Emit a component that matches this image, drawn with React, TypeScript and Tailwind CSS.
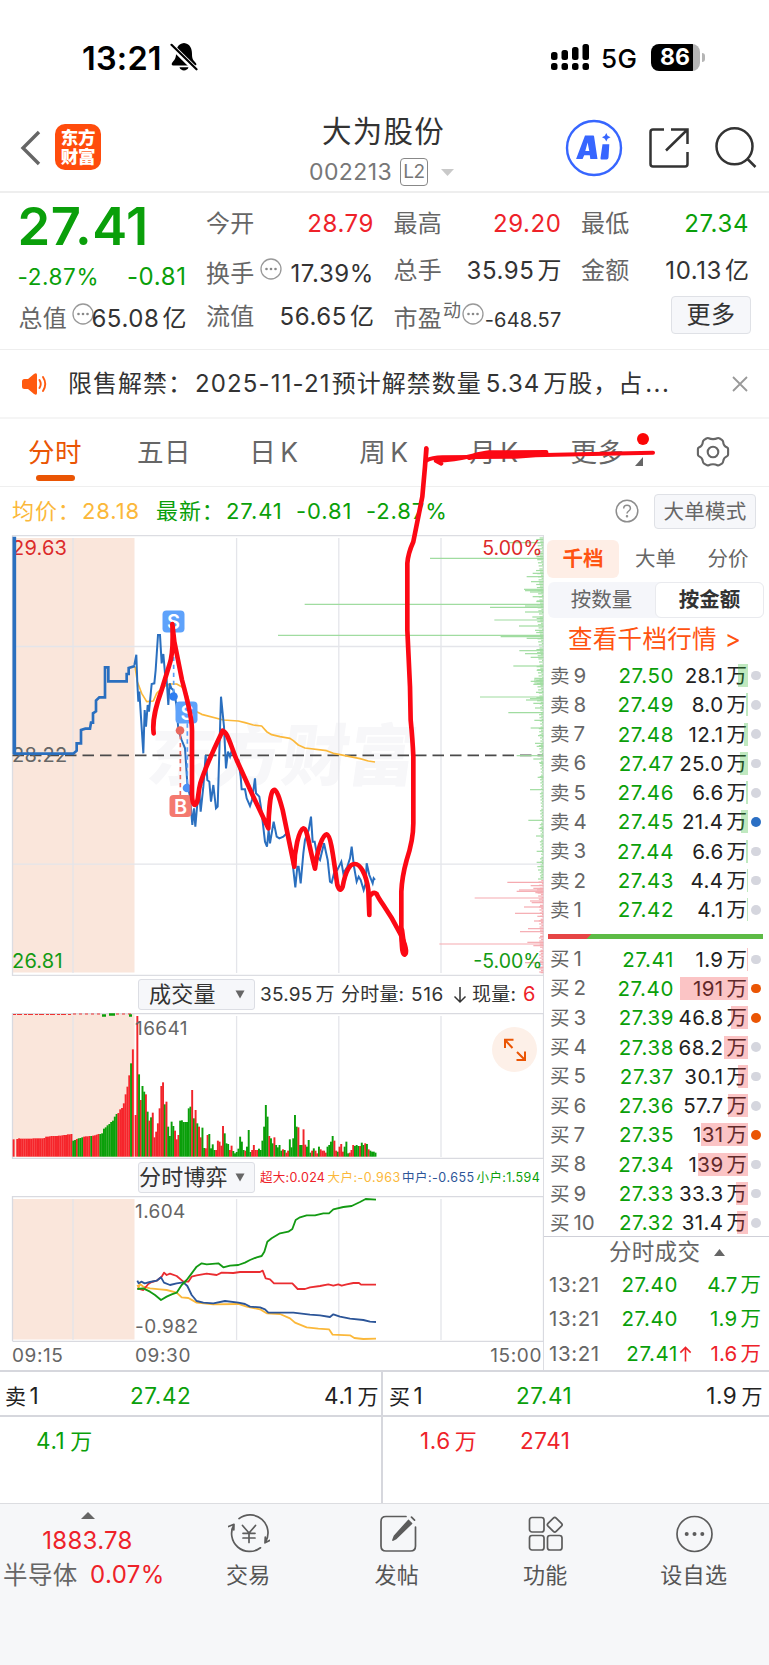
import React from "react";

type Level = { n: string; p: string; v: string; w: number; dot?: string };

const sells: Level[] = [
  { n: "9", p: "27.50", v: "28.1", w: 10 },
  { n: "8", p: "27.49", v: "8.0", w: 2 },
  { n: "7", p: "27.48", v: "12.1", w: 4 },
  { n: "6", p: "27.47", v: "25.0", w: 8.5 },
  { n: "5", p: "27.46", v: "6.6", w: 2 },
  { n: "4", p: "27.45", v: "21.4", w: 7.5, dot: "bg-[#2a6fc4]" },
  { n: "3", p: "27.44", v: "6.6", w: 2 },
  { n: "2", p: "27.43", v: "4.4", w: 1 },
  { n: "1", p: "27.42", v: "4.1", w: 1 },
];

const buys: Level[] = [
  { n: "1", p: "27.41", v: "1.9", w: 1 },
  { n: "2", p: "27.40", v: "191", w: 68, dot: "bg-[#ea5504]" },
  { n: "3", p: "27.39", v: "46.8", w: 17, dot: "bg-[#ea5504]" },
  { n: "4", p: "27.38", v: "68.2", w: 24 },
  { n: "5", p: "27.37", v: "30.1", w: 10.5 },
  { n: "6", p: "27.36", v: "57.7", w: 20.5 },
  { n: "7", p: "27.35", v: "131", w: 47, dot: "bg-[#ea5504]" },
  { n: "8", p: "27.34", v: "139", w: 50 },
  { n: "9", p: "27.33", v: "33.3", w: 12 },
  { n: "10", p: "27.32", v: "31.4", w: 11 },
];

const volume =
  "r125 r422 g247 r170 g212 g195 r187 g135 r108 g118 r132 r58 r75 r100 r145 r212 r223 g157 r165 g90 g62 g105 g92 r78 r52 r65 g108 g109 g104 g104 g104 g145 g150 r200 g115 r140 g100 r90 r58 g87 g26 r25 r65 g68 g25 g37 g20 r20 r48 r45 r33 r92 g70 g40 g38 r20 r33 g17 g10 g14 g24 g60 g45 g20 r18 g30 g80 g14 r20 r35 r20 r20 g24 g20 g48 g90 g155 g120 r62 g55 g40 r58 g35 g28 g35 g18 r22 g20 r12 r18 g52 g28 g55 g125 g90 r88 g35 g35 r82 r36 g30 g50 g12 r18 g25 r18 r10 g30 r22 r18 r18 r12 g30 g35 g45 g62 r48 r18 g15 r30 r38 r15 g30 g45 g10 r12 r20 r35 g32 g35 g32 r32 g42 g35 r40 g38 r22 g18 g15 g15 g12".split(" ");

const auction =
  "r52 w0 r53 r55 r54 r54 r54 r54 r54 r54 r54 r55 r55 r55 r55 r55 r55 r56 r60 r60 r61 r62 r62 r62 r62 r63 r63 r64 r65 r65 r67 r67 r68 g48 g50 r53 g55 g56 g58 r60 r61 r61 r62 g62 r63 r64 r66 r68 g68 g70 g84 g88 g94 g98 g104 g108 g120 g128 r131 r142 r146 r160 r187 r210 r244 g280 r322".split(" ");

const depth: [number, number][] = [
  [38, 110], [85, 340], [130, 32], [140, 50], [155, 37], [178, 58], [182, 55], [186, 40], [200, 32], [213, 20], [223, 716], [228, 55], [232, 160],
  [246, 55], [261, 33], [270, 147], [288, 73], [301, 25], [316, 796], [320, 128], [325, 50], [362, 72], [371, 55], [382, 38], [408, 90], [421, 20],
  [445, 27], [450, 28], [454, 38], [459, 27], [463, 30], [487, 22], [501, 190], [506, 40], [510, 52], [520, 30], [534, 25], [548, 105], [571, 27],
  [594, 38], [617, 16], [640, 25], [649, 20], [677, 80], [687, 30], [700, 10], [742, 17], [779, 40], [871, 45], [895, 14], [918, 22], [964, 20],
  [997, 20], [1010, 18], [1020, 16], [1057, 108], [1067, 38], [1075, 30], [1080, 73], [1084, 80], [1088, 24], [1104, 206], [1113, 40], [1118, 35],
  [1131, 58], [1150, 85], [1159, 18], [1173, 28], [1196, 46], [1205, 70], [1219, 10], [1237, 48], [1242, 312], [1247, 30], [1265, 12], [1298, 55],
  [1312, 20], [1328, 8],
];

const small: [number, number][] = Array.from({ length: 281 }, (_, i) => {
  const y = 24 + i * 4.65;
  const r = ((i * 7919 + 13) % 31) / 31;
  const base = y < 130 ? 22 : y < 520 ? 20 : y < 700 ? 12 : y < 1040 ? 9 : y < 1130 ? 18 : 12;
  return [y, 2 + r * base];
});

const tone = (y: number) => (y < 1050 ? "#a0dca0" : "#f5aab0");

function Grid({ y1, y2 }: { y1: number; y2: number }) {
  return (
    <g stroke="#e4e5ea" strokeWidth="1.3">
      {[73, 236.6, 338.8, 441].map((x) => (
        <line key={x} x1={x} x2={x} y1={y1} y2={y2} />
      ))}
    </g>
  );
}

function PriceChart() {
  return (
    <svg className="block" width="544" height="441" viewBox="0 535 544 441" fontFamily='Inter, "Noto Sans CJK SC", sans-serif'>
      <rect x="12.5" y="538" width="122" height="434.5" fill="#fae6db" />
      <text x="147" y="780" fontSize="67" fontWeight="900" fill="#f7f7f9" transform="skewX(-8) translate(108 0)">东方财富</text>
      <Grid y1={538} y2={973} />
      <g stroke="#e4e5ea" strokeWidth="1.3">
        <path d="M12.5 646.5H543M12.5 864.2H543" />
        <path d="M12.5 535.5H544M12.5 975.3H544M12.5 535V976M543.5 535V976" stroke="#dcdde2" />
      </g>
      <path d="M12.5 755.3H543" stroke="#4a4a4a" strokeWidth="1.8" strokeDasharray="11.5 6" />
      <g transform="translate(260 530) scale(.33333)" strokeWidth="3.6">
        {[...small, ...depth].map(([y, l], i) => (
          <line key={i} x1={850 - l} x2={850} y1={y} y2={y} stroke={tone(y)} />
        ))}
      </g>
      <text x="12" y="554.5" fontSize="20" letterSpacing=".2" fill="#dc2a2a">29.63</text>
      <text x="12" y="762" fontSize="20" letterSpacing=".2" fill="#666">28.22</text>
      <text x="12" y="968" fontSize="20" letterSpacing=".2" fill="#139a13">26.81</text>
      <text x="542.5" y="554.5" fontSize="19.5" textAnchor="end" fill="#dc2a2a">5.00%</text>
      <text x="542.5" y="968" fontSize="19.5" textAnchor="end" fill="#139a13">-5.00%</text>
      <g transform="translate(0 530) scale(.33333)" fill="none" strokeLinejoin="round">
        <path
          stroke="#fbb83a"
          strokeWidth="5"
          d="M405 410L412 455 425 490 440 515 460 513 470 490 490 470 510 462 530 462 545 470 560 490 572 530 590 545 605 553 670 570 715 573 735 578 760 585 785 588 800 605 815 614 840 620 870 625 880 632 895 645 915 654 980 662 1000 670 1020 674 1050 680 1080 686 1105 693 1125 696"
        />
        <path stroke="#2a6fbf" strokeWidth="11" d="M43 20V672" />
        <path
          stroke="#2a6fbf"
          strokeWidth="8"
          strokeLinejoin="miter"
          d="M40 671H220L230 662V640H243V600L256 596H270L273 578H279V550L288 544V512L298 502H315V412H325V454H380V432H386V414L405 408"
        />
        <path
          stroke="#2a6fbf"
          strokeWidth="6"
          strokeLinejoin="miter"
          d="M403 405L409 374 412 460 415 515 418 485 430 670 434 540 438 590 443 525 447 545 455 462 463 460 467 420 474 315 480 315 485 400 490 372 495 430 500 450 505 525 509 460 514 475 520 480 525 500 530 530 535 600 545 630 555 655 562 760 570 800 577 885 582 835 586 890 592 820 597 770 602 845 610 770 617 675 622 750 628 755 633 815 640 765 648 835 653 830 663 500 672 590 678 715 684 665 690 680 697 655 705 685 715 690 722 740 725 778 735 778 740 805 750 828 756 810 765 745 768 790 778 800 784 840 795 935 801 950 806 900 810 940 821 875 830 920 838 925 850 920 860 910 870 935 878 1000 886 1072 892 1010 896 1010 902 1060 910 970 915 930 926 900 933 860 938 935 944 935 952 980 960 990 972 940 983 990 990 1055 995 1058 1002 1030 1012 1020 1024 995 1030 1030 1042 1010 1050 985 1055 950 1062 1010 1070 1055 1076 1040 1082 1050 1091 1080 1097 1060 1100 1000 1108 1035 1118 1060 1121 1045 1125 1050"
        />
        <path d="M521 380V490M562 580V770" stroke="#5aa0f8" strokeWidth="5" strokeDasharray="13 11" />
        <path d="M541 615V795" stroke="#ee6b60" strokeWidth="5" strokeDasharray="13 11" />
      </g>
      <g>
        <circle cx="173.5" cy="696.5" r="4.3" fill="#2f7df0" />
        <circle cx="187" cy="788" r="4.3" fill="#4b90f5" />
        <circle cx="180" cy="730.5" r="4.3" fill="#e9665c" />
        <rect x="162.5" y="610.5" width="22" height="22" rx="4" fill="#5ea2fb" />
        <rect x="175.5" y="701.5" width="22" height="22" rx="4" fill="#5ea2fb" />
        <rect x="169.5" y="795" width="22" height="22" rx="4" fill="#f4796f" />
        <g fontSize="20" fontWeight="600" fill="#fff" textAnchor="middle">
          <text x="173.5" y="629">S</text>
          <text x="187" y="720">S</text>
          <text x="180.5" y="813.5">B</text>
        </g>
      </g>
    </svg>
  );
}

function VolumeChart() {
  return (
    <svg className="block" width="544" height="146" viewBox="0 1013 544 146" fontFamily="Inter, sans-serif">
      <rect x="12.5" y="1014" width="122" height="143" fill="#fae6db" />
      <Grid y1={1016} y2={1157} />
      <path d="M12.5 1013.5H544M12.5 1158.5H544M12.5 1013V1159M543.5 1013V1159" stroke="#d9dae0" strokeWidth="1.3" />
      <path d="M13 1014.5H72" stroke="#e33" strokeWidth="1.2" strokeDasharray="3 1 5 2" />
      <path d="M73 1014H101M116 1014H132" stroke="#e33" strokeWidth="1" strokeDasharray="3 3" />
      <path d="M102 1015.5H106M109 1014.5H115M129 1015.5H132" stroke="#0a9f0a" strokeWidth="2.4" />
      <g transform="translate(0 970) scale(.33333)">
        {auction.map((b, i) => {
          const h = Number(b.slice(1));
          return <rect key={i} x={38 + i * 5.42} y={560 - h} width="5.8" height={h} fill={b[0] === "g" ? "#0a9f0a" : "#f6252b"} />;
        })}
        {volume.map((b, i) => {
          const h = Number(b.slice(1));
          return <rect key={i} x={404 + i * 5.14} y={560 - h} width="5.8" height={h} fill={b[0] === "g" ? "#0a9f0a" : "#f0252b"} />;
        })}
      </g>
      <text x="135" y="1035" fontSize="19" letterSpacing=".4" fill="#666">16641</text>
      <circle cx="514.5" cy="1049.5" r="22.5" fill="#fdf0e8" />
      <path d="M505 1048V1039.8H513.5M505 1040L512.5 1048M525 1051.5V1060H516.5M524.5 1059.5L517 1052" fill="none" stroke="#ea5504" strokeWidth="2" />
    </svg>
  );
}

function GameChart() {
  return (
    <svg className="block" width="544" height="146" viewBox="0 1196 544 146" fontFamily="Inter, sans-serif">
      <rect x="12.5" y="1199" width="122" height="140.5" fill="#fae6db" />
      <Grid y1={1199} y2={1340} />
      <path d="M12.5 1196.7H544M12.5 1341.3H544M12.5 1196V1341M543.5 1196V1342" stroke="#d9dae0" strokeWidth="1.3" />
      <g transform="translate(0 970) scale(.33333)" fill="none" strokeWidth="5.5" strokeLinejoin="round">
        <path stroke="#fbb83a" d="M412 945L416 952 420 942 430 950 450 955 480 958 500 960 530 968 545 982 565 984 590 998 640 1003 715 1002 740 1010 780 1018 800 1030 840 1032 870 1045 885 1058 920 1072 955 1076 987 1078 998 1094 1050 1096 1063 1104 1090 1107 1128 1106" />
        <path stroke="#ea2d31" d="M412 955L430 960 445 942 455 936 470 932 485 920 492 908 500 915 510 911 530 918 550 935 565 935 575 920 590 916 620 911 650 915 665 908 700 909 720 906 780 906 788 902 797 925 810 928 822 940 877 940 893 957 915 957 930 952 960 948 985 943 1000 947 1015 943 1025 947 1040 943 1060 939 1077 939 1083 944 1128 944" />
        <path stroke="#2c5598" d="M412 932L416 940 424 935 434 940 450 936 470 932 483 922 492 938 510 945 530 940 550 937 562 948 575 975 590 993 610 998 640 1000 675 993 715 998 735 1002 750 1010 780 1012 795 1018 805 1028 880 1028 930 1034 960 1036 990 1041 1000 1033 1020 1040 1050 1046 1090 1050 1110 1055 1128 1056" />
        <path stroke="#139a13" d="M412 957L430 955 450 965 465 975 483 990 500 980 515 973 530 968 545 945 560 930 575 910 590 890 605 880 620 883 655 880 670 892 690 887 715 885 735 878 750 870 770 862 785 858 793 845 802 815 815 805 840 790 865 785 877 777 887 750 900 742 920 736 945 736 970 730 987 730 1000 718 1030 711 1055 708 1080 696 1097 687 1128 689" />
      </g>
      <text x="135" y="1218" fontSize="19" letterSpacing=".4" fill="#666">1.604</text>
      <text x="135" y="1333" fontSize="19" letterSpacing=".5" fill="#666">-0.982</text>
    </svg>
  );
}

function Dots({ className = "" }: { className?: string }) {
  return (
    <svg className={`shrink-0 ${className}`} width="22" height="22" viewBox="0 0 22 22">
      <circle cx="11" cy="11" r="10" fill="none" stroke="#999" strokeWidth="1.3" />
      <circle cx="6.5" cy="11" r="1.3" fill="#888" />
      <circle cx="11" cy="11" r="1.3" fill="#888" />
      <circle cx="15.5" cy="11" r="1.3" fill="#888" />
    </svg>
  );
}

function Unit({ children = "万" }: { children?: string }) {
  return <span className="ml-[3px] tracking-normal">{children}</span>;
}

function Book({ side, rows }: { side: string; rows: Level[] }) {
  const buy = side === "买";
  return (
    <div>
      {rows.map((r) => (
        <div key={r.n} className="flex h-[29.3px] items-center text-[20.5px] leading-[29.3px]">
          <div className="w-[58px] pl-[6px] text-[19.5px] text-[#666]">
            {side}
            <span className="ml-[4px] text-[20.5px]">{r.n}</span>
          </div>
          <div className="w-[72px] text-right tracking-[0.6px] text-[#0a9f0a]">{r.p}</div>
          <div className="relative w-[74px] pr-[1px] text-right tracking-[0.4px] whitespace-nowrap text-[#222]">
            {r.v}
            <Unit />
            <span className={`absolute top-[3px] right-0 h-[23px] ${buy ? "bg-[#f23a3f]/30" : "bg-[#2fb62f]/30"}`} style={{ width: r.w }} />
          </div>
          <span className={`ml-[3px] h-[9.5px] w-[9.5px] rounded-full ${r.dot ?? "bg-[#d5d6de]"}`} />
        </div>
      ))}
    </div>
  );
}

function Select({ children, pad }: { children: string; pad: string }) {
  return (
    <div className={`flex h-[31px] w-[117px] items-center justify-between rounded-[3px] border border-[#dcdee4] bg-[#f6f7fa] pr-[9px] text-[22px] leading-[29px] tracking-[0.2px] text-[#333] ${pad}`}>
      <span className="whitespace-nowrap">{children}</span>
      <svg width="10" height="9" viewBox="0 0 10 9">
        <path d="M.5 .5h9L5 8.500z" fill="#666" />
      </svg>
    </div>
  );
}

function Nav({ label, children }: { label: string; children: React.ReactNode }) {
  return (
    <div className="flex w-[148.5px] flex-col items-center pt-[9px] text-[22px] leading-[30px] text-[#555]">
      <svg width="42" height="42" viewBox="0 0 42 42" fill="none" stroke="#5c5c5c" strokeWidth="1.7" strokeLinecap="round" strokeLinejoin="round">
        {children}
      </svg>
      <span className="mt-[5px] -ml-[2px] tracking-[0.3px]">{label}</span>
    </div>
  );
}

export default function App() {
  const tab = "flex w-[110px] items-center justify-center";
  return (
    <div className="relative h-[1665px] w-[769px] overflow-hidden bg-white font-[Inter,'Noto_Sans_CJK_SC',sans-serif] text-[#333]">
      <div className="flex h-[110px] items-center pt-[6px] pl-[82px] text-black">
        <span className="w-[88px] pt-px text-[32.5px] leading-[40px] font-semibold tracking-[0.2px]">13:21</span>
        <svg width="28" height="30" viewBox="0 0 28 30" className="-mt-[3px]">
          <path d="M14 1C8 2 6 6 6 12c0 5-2 6-4 9-.8 1.500 0 2.500 1 2.500h22c1.200 0 1.800-1 1-2.300C23 18 22 17 22 12c0-6-2-10-8-11zM9.500 25.300h9C17.500 29.500 10.500 29.500 9.500 25.300z" fill="#000" />
          <path d="M1 3.500L26 28" stroke="#fff" strokeWidth="5.500" />
          <path d="M1.500 2.800L26.500 27.300" stroke="#000" strokeWidth="2.200" strokeLinecap="round" />
        </svg>
        <svg width="40" height="28" viewBox="0 0 40 28" className="-mt-[2px] ml-[352px]">
          <g fill="#000">
            <rect x="1" y="9" width="6.500" height="8" rx="2.500" />
            <rect x="11.500" y="7" width="6.500" height="10" rx="2.500" />
            <rect x="22" y="4" width="6.500" height="13" rx="2.500" />
            <rect x="32.500" y="1" width="6.500" height="16" rx="2.500" />
            <rect x="1" y="20" width="6.500" height="7" rx="2.500" />
            <rect x="11.500" y="20" width="6.500" height="7" rx="2.500" />
            <rect x="22" y="20" width="6.500" height="7" rx="2.500" />
            <rect x="32.500" y="20" width="6.500" height="7" rx="2.500" />
          </g>
        </svg>
        <span className="ml-[11px] w-[50px] pt-px text-[26px] leading-[40px] font-medium tracking-[0.4px]">5G</span>
        <div className="-mt-[2px] flex h-[27px] w-[49px] items-center overflow-hidden rounded-[8px] bg-[linear-gradient(90deg,#000_0_42px,#b5b5b5_42px)] pt-px pl-[9px] text-[23px] leading-[27px] font-bold text-white">86</div>
        <span className="-mt-[2px] ml-[2px] h-[9px] w-[3px] rounded-r-full bg-[#b5b5b5]" />
      </div>

      <div className="flex h-[83px] items-start border-b-2 border-[#eeeeee]">
        <svg className="mt-[19px] ml-[19px]" width="24" height="38" viewBox="0 0 24 38">
          <path d="M20 3L4 19l16 16" fill="none" stroke="#666" strokeWidth="3.400" />
        </svg>
        <div className="mt-[14px] ml-[12px] flex h-[46px] w-[46px] flex-col items-center justify-center rounded-[10px] bg-[#ff4c0c] text-[17.5px] leading-[19px] font-black tracking-[-0.3px] text-white">
          <span>东方</span>
          <span>财富</span>
        </div>
        <div className="ml-[189px] flex w-[186px] flex-col items-center">
          <div className="pt-px pl-[1px] text-[29.5px] leading-[40px] tracking-[1.2px]">大为股份</div>
          <div className="mt-[1px] flex h-[40px] items-center self-start pl-[19px] text-[23px] leading-[40px] tracking-[0.4px] text-[#777]">
            <span className="w-[91px]">002213</span>
            <span className="flex h-[28px] w-[28px] items-center justify-center rounded-[4px] border border-[#888] text-[19px] tracking-[-0.5px]">L2</span>
            <svg className="ml-[13px]" width="13" height="7" viewBox="0 0 13 7">
              <path d="M0 0h13L6.500 7z" fill="#c9c9c9" />
            </svg>
          </div>
        </div>
        <svg className="mt-[8px] ml-[88px]" width="60" height="60" viewBox="0 0 60 60">
          <circle cx="30" cy="30" r="27" fill="none" stroke="#3766ff" strokeWidth="2.400" />
          <path
            fill="#3766ff"
            fillRule="evenodd"
            d="M21 17.500h8.200q.8 0 .9 1L33.500 41h-7.200l-.5-3.700h-5.600L18.600 41h-6.500zM23.600 24.500L21.300 33h4z"
          />
          <path fill="#3766ff" d="M38.500 26.300h6.800L44.500 39.500q-.1 2-1.800 2h-5.200q-1.200 0-1-1.500zM42.300 15l1.300 2.700 2.900 1.500-2.900 1.500-1.300 2.800-1.500-2.800-2.800-1.500 2.800-1.500z" />
        </svg>
        <svg className="mt-[16px] ml-[23px]" width="44" height="44" viewBox="0 0 44 44" fill="none" stroke="#333" strokeWidth="2.500">
          <path d="M17 3.500H6q-2.500 0-2.500 2.500v32q0 2.500 2.500 2.500h32q2.500 0 2.500-2.500V26M24 3.500h16.500V18M40.500 3.500L19 24.500" />
        </svg>
        <svg className="mt-[14px] ml-[20px]" width="50" height="50" viewBox="0 0 50 50" fill="none" stroke="#333" strokeWidth="2.500">
          <circle cx="23.500" cy="22.300" r="18" />
          <path d="M36 34.500l8.500 8.500" />
        </svg>
      </div>

      <div className="grid h-[157px] grid-cols-[168px_168px_168px_168px] content-start gap-x-[19.500px] border-b border-[#eeeeee] pt-[7px] pl-[18.500px] text-[24px] leading-[47px] tracking-[0.6px] whitespace-nowrap text-[#333] [&_b]:font-normal [&_b]:tracking-[0.2px] [&_b]:text-[#666]">
        <div className="-ml-[1px] h-[54px] text-[52.5px] leading-[53px] font-semibold tracking-[0.5px] text-[#0a9f0a]">27.41</div>
        <div className="flex h-[47px] justify-between"><b>今开</b><span className="text-[#ee2229]">28.79</span></div>
        <div className="flex h-[47px] justify-between"><b>最高</b><span className="text-[#ee2229]">29.20</span></div>
        <div className="flex h-[47px] justify-between"><b>最低</b><span className="text-[#0a9f0a]">27.34</span></div>

        <div className="-ml-[1px] flex justify-between text-[22.5px] leading-[46px] text-[#0a9f0a]"><span>-2.87%</span><span className="text-[24px]">-0.81</span></div>
        <div className="-mt-[7px] flex items-center"><b>换手</b><Dots className="-mt-[10px] ml-[6px]" /><span className="ml-auto">17.39%</span></div>
        <div className="-mt-[7px] flex justify-between"><b>总手</b><span>35.95<Unit /></span></div>
        <div className="-mt-[7px] flex justify-between"><b>金额</b><span>10.13<Unit>亿</Unit></span></div>

        <div className="-mt-[7px] flex items-center"><b>总值</b><Dots className="-mt-[10px] ml-[5px]" /><span className="-ml-[4px] flex-1 text-right">65.08<Unit>亿</Unit></span></div>
        <div className="-mt-[7px] flex justify-between"><b>流值</b><span>56.65<Unit>亿</Unit></span></div>
        <div className="-mt-[7px] flex items-center"><b>市盈</b><b className="-mt-[16px] ml-[1px] text-[18px]">动</b><Dots className="-mt-[10px] ml-[1px]" /><span className="mt-[4px] ml-auto text-[20px] tracking-[0.2px]">-648.57</span></div>
        <div className="-mt-[4px] flex justify-end"><span className="-mr-[2px] h-[38px] w-[80px] rounded-[4px] border border-[#dfe1e6] bg-[#f6f7fa] text-center leading-[36px]">更多</span></div>
      </div>

      <div className="flex h-[69px] items-center border-b-2 border-[#f5f5f5] pl-[21px]">
        <svg width="27" height="24" viewBox="0 0 27 24">
          <path d="M3.500 7H7l6-5q3-2 3 1v18q0 3-3 1l-6-5H3.500Q1 17 1 14.500v-5Q1 7 3.500 7z" fill="#ff5a10" />
          <path d="M18.500 8q2.500 4 0 8M22 5q4.500 7 0 14" fill="none" stroke="#ff5a10" strokeWidth="1.900" strokeLinecap="round" />
        </svg>
        <span className="ml-[20px] w-[650px] text-[24px] leading-[40px] tracking-[1px] whitespace-nowrap">
          限售解禁：<span className="ml-[2px] tracking-[1.15px]">2025-11-21</span><span className="ml-[1px]">预计解禁数量</span><span className="ml-[4px]">5.34</span><span className="ml-[3px]">万股，占</span><span className="ml-[2px] tracking-[1.400px]">...</span>
        </span>
        <svg className="ml-[13px]" width="18" height="18" viewBox="0 0 18 18">
          <path d="M2 2l14 14M16 2L2 16" stroke="#999" strokeWidth="1.800" />
        </svg>
      </div>

      <div className="flex h-[68px] border-b border-[#efefef] text-[26.5px] leading-[65px] tracking-[0.5px] text-[#666]">
        <div className={`${tab} relative text-[#ea5504]`}>
          分时
          <span className="absolute bottom-[5px] left-[35.5px] h-[6px] w-[39px] rounded-full bg-[#ea5504]" />
        </div>
        <div className="-ml-px flex w-[110px] items-center justify-center">五日</div>
        <div className={tab}>日<span className="ml-[4px]">K</span></div>
        <div className={tab}>周<span className="ml-[4px]">K</span></div>
        <div className={tab}>月<span className="ml-[4px]">K</span></div>
        <div className="relative flex w-[97px] items-center justify-center">
          更多
          <svg className="absolute right-[3px] bottom-[20px]" width="8" height="9" viewBox="0 0 8 9"><path d="M8 0v9H0z" fill="#666" /></svg>
          <span className="absolute top-[14px] right-[-3px] h-[12px] w-[12px] rounded-full bg-[#fb0606]" />
        </div>
        <svg className="mt-[16px] ml-[50px]" width="34" height="34" viewBox="0 0 34 34" fill="none" stroke="#666" strokeWidth="2.100" strokeLinejoin="round">
          <path d="M12.700 3.200q1.800.9 4.300.9t4.300-.9q1.200-.4 2.400.3l2.200 1.300q1.300.9 1.300 2.300.2 3.800 4 5.400.9.500.9 1.500v5.500q0 1-1 1.600-3.700 1.800-3.900 5.200-.1 1.400-1.300 2.300l-2.200 1.300q-1.200.7-2.400.3-1.800-.9-4.300-.9t-4.300.9q-1.200.4-2.400-.3l-2.200-1.300q-1.200-.9-1.300-2.300-.2-3.400-3.900-5.200-1-.6-1-1.600V14q0-1 .9-1.500 3.800-1.600 4-5.400 0-1.400 1.300-2.300l2.200-1.300q1.200-.7 2.400-.3z" />
          <circle cx="17" cy="17" r="5.300" />
        </svg>
      </div>

      <div className="flex h-[48px] items-center pl-[12px] text-[22px] leading-[40px] tracking-[0.9px] whitespace-nowrap text-[#0a9f0a]">
        <span className="w-[70px] text-[#fbb83a]">均价：</span>
        <span className="w-[74px] text-[#fbb83a]">28.18</span>
        <span className="w-[70px]">最新：</span>
        <span className="w-[70px]">27.41</span>
        <span className="w-[70px]">-0.81</span>
        <span className="w-[249px]">-2.87%</span>
        <svg width="24" height="24" viewBox="0 0 24 24" fill="none" stroke="#8d8d8d" strokeWidth="1.500">
          <circle cx="12" cy="12" r="10.800" />
          <path d="M8.700 9.500c0-4.300 6.700-4.300 6.700 0 0 2.500-3.400 2.500-3.400 5" />
          <circle cx="12" cy="17.300" r=".5" fill="#8d8d8d" />
        </svg>
        <span className="ml-[15px] h-[35px] w-[102px] rounded-[4px] border border-[#dfe1e6] bg-[#f6f7fa] text-center text-[20.5px] leading-[34px] tracking-[0.3px] text-[#666]">大单模式</span>
      </div>

      <div className="flex h-[835px]">
        <div className="w-[544px]">
          <PriceChart />
          <div className="flex h-[37px] items-center border-r border-[#dcdde2] pl-[138px] text-[19px] leading-[37px] tracking-[0.2px] whitespace-nowrap">
            <Select pad="pl-[10px]">成交量</Select>
            <span className="ml-[5px] w-[81px]">35.95<Unit /></span>
            <span className="w-[70px]">分时量:</span>
            <span className="w-[42px] tracking-[0.6px]">516</span>
            <svg width="14" height="18" viewBox="0 0 14 18"><path d="M7 1v15M1.500 10.500L7 16l5.500-5.500" fill="none" stroke="#333" strokeWidth="1.500" /></svg>
            <span className="ml-[5px] w-[51px]">现量:</span>
            <span className="text-[20px] text-[#ee2229]">6</span>
          </div>
          <VolumeChart />
          <div className="flex h-[37px] items-center border-r border-[#dcdde2] pl-[138px] text-[12.5px] leading-[37px] whitespace-nowrap">
            <Select pad="pl-0">分时博弈</Select>
            <span className="ml-[5px] w-[67.5px] tracking-[0.3px] text-[#ee2229]">超大:0.024</span>
            <span className="w-[74.5px] tracking-[0.5px] text-[#fbb83a]">大户:-0.963</span>
            <span className="w-[74.5px] tracking-[0.5px] text-[#2c5598]">中户:-0.655</span>
            <span className="tracking-[0.4px] text-[#0a9f0a]">小户:1.594</span>
          </div>
          <GameChart />
          <div className="flex h-[28px] items-center border-r border-[#dcdde2] pr-px pl-[12px] text-[19px] leading-[30px] tracking-[0.6px] text-[#666]">
            <span className="w-[123px]">09:15</span>
            <span>09:30</span>
            <span className="ml-auto">15:00</span>
          </div>
        </div>

        <div className="w-[225px] pt-[5px] whitespace-nowrap">
          <div className="flex pl-[3px] text-[20.5px] leading-[38px] text-[#666]">
            <span className="h-[38px] w-[72px] rounded-[6px] bg-[#feeee6] text-center font-bold text-[#ff5310]">千档</span>
            <span className="w-[73px] text-center">大单</span>
            <span className="w-[72px] text-center">分价</span>
          </div>
          <div className="mt-[4px] ml-[4px] flex h-[36px] w-[216px] rounded-[6px] bg-[#f5f6fa] text-[20.5px] leading-[35px] text-[#666]">
            <span className="w-[107px] text-center">按数量</span>
            <span className="w-[109px] rounded-[6px] border border-[#e9eaee] bg-white text-center leading-[34px] font-bold text-[#333]">按金额</span>
          </div>
          <div className="flex h-[43px] items-center pl-[24px] text-[24.5px] leading-[43px] tracking-[0.3px] text-[#ff5310]">
            查看千档行情<span className="ml-[8px]">&gt;</span>
          </div>
          <Book side="卖" rows={sells} />
          <div className="mt-[9px] mb-[6px] ml-[4px] h-[5px] w-[215px] bg-[linear-gradient(135deg,#e64545_0_31px,#5dbb46_31px)]" />
          <Book side="买" rows={buys} />
          <div className="-mt-[2px] flex h-[32px] items-center border-t border-[#cfd0d8] pl-[65px] text-[22.5px] leading-[30px] tracking-[0.3px] text-[#666]">
            分时成交
            <svg className="ml-[14px]" width="11" height="7" viewBox="0 0 11 7"><path d="M0 7h11L5.500 0z" fill="#666" /></svg>
          </div>
          {[
            ["27.40", "4.7", ""],
            ["27.40", "1.9", ""],
            ["27.41", "1.6", "↑"],
          ].map(([p, v, up], i) => (
            <div key={i} className="flex h-[34.5px] items-center text-[20.5px] leading-[34px]">
              <span className="w-[64px] pl-[5px] tracking-[0.6px] text-[#666]">13:21</span>
              <span className="w-[70px] text-right tracking-[0.6px] text-[#0a9f0a]">{p}</span>
              <svg className={up ? "" : "invisible"} width="15" height="18" viewBox="0 0 16 18"><path d="M8 17V2M2.500 7.500L8 2l5.500 5.500" fill="none" stroke="#ee2229" strokeWidth="1.700" /></svg>
              <span className={`w-[68px] text-right tracking-[0.2px] ${up ? "text-[#ee2229]" : "text-[#0a9f0a]"}`}>{v}<Unit /></span>
            </div>
          ))}
        </div>
      </div>

      <div className="flex h-[133px] border-t-2 border-[#d6d7dd] text-[22.5px] leading-[47px] tracking-[0.6px] whitespace-nowrap text-[#222]">
        <div className="w-[383px] border-r-2 border-[#d6d7dd]">
          <div className="flex h-[45px] border-b-2 border-[#d6d7dd] pr-[2px] pl-[5px]">
            <span className="w-[125px] text-[21px]">卖<span className="ml-[3px] text-[22.5px]">1</span></span>
            <span className="text-[#0a9f0a]">27.42</span>
            <span className="ml-auto">4.1<span className="ml-[4px] text-[21px]">万</span></span>
          </div>
          <div className="pl-[36px] leading-[48px] text-[#0a9f0a]">4.1<span className="ml-[5px] text-[22px]">万</span></div>
        </div>
        <div className="w-[386px]">
          <div className="flex h-[45px] border-b-2 border-[#d6d7dd] pr-[6px] pl-[6px]">
            <span className="w-[127px] text-[21px]">买<span className="ml-[3px] text-[22.5px]">1</span></span>
            <span className="text-[#0a9f0a]">27.41</span>
            <span className="ml-auto">1.9<span className="ml-[4px] text-[21px]">万</span></span>
          </div>
          <div className="flex pl-[37px] leading-[48px] text-[#ee2229]">
            <span className="w-[100px]">1.6<span className="ml-[4px] text-[22px]">万</span></span>
            <span className="tracking-[0.5px]">2741</span>
          </div>
        </div>
      </div>

      <div className="flex h-[162px] border-t border-[#dcdde1] bg-[#f6f7f9]">
        <div className="w-[175px] text-[24px] leading-[34px] tracking-[0.3px] whitespace-nowrap text-[#ee2229]">
          <div className="flex flex-col items-center pt-[8px]">
            <svg width="14" height="7" viewBox="0 0 14 7"><path d="M0 7h14L7 0z" fill="#666" /></svg>
            <span className="mt-[5px]">1883.78</span>
          </div>
          <div className="flex pl-[3px] tracking-[0.4px]"><span className="w-[87px] text-[24.5px] text-[#666]">半导体</span><span>0.07%</span></div>
        </div>
        <Nav label="交易">
          <path d="M11 5.600A18 18 0 0 1 37.500 29M32.500 34.800A18 18 0 0 1 6 11.500M0.500 13.500L6 11.300 5.800 17M42 27.300L37 29.800 37.300 24" />
          <path d="M14.500 12.500L21 20l6.500-7.500M21 20v9.500M15 20.300h12M15 25h12" />
        </Nav>
        <Nav label="发帖">
          <path d="M29 3.500H9Q4 3.500 4 8.500v24.500q0 5 5 5h24.500q5 0 5-5V14" />
          <path d="M34.500 4.200l3 3M31.500 7.500l3 3L19 25.500l-3 1.500 1.500-4z" fill="#5c5c5c" />
        </Nav>
        <Nav label="功能">
          <rect x="4.500" y="4.500" width="14.500" height="14.500" rx="2.500" />
          <rect x="4.500" y="22.500" width="14.500" height="14.500" rx="2.500" />
          <rect x="22.500" y="22.500" width="14.500" height="14.500" rx="2.500" />
          <rect x="24" y="6" width="11.500" height="11.500" rx="2" transform="rotate(45 29.750 11.750)" />
        </Nav>
        <Nav label="设自选">
          <circle cx="20.500" cy="21" r="17.500" />
          <g fill="#5c5c5c" stroke="none"><circle cx="12.700" cy="21" r="2" /><circle cx="20.500" cy="21" r="2" /><circle cx="28.300" cy="21" r="2" /></g>
        </Nav>
      </div>

      <svg className="pointer-events-none absolute top-0 left-0" width="769" height="1000" viewBox="0 0 769 1000" fill="none" stroke="#fc0814" strokeLinecap="round" strokeLinejoin="round">
        <g transform="translate(0 530) scale(.33333)" strokeWidth="14">
          <path d="M461 610C456 570 467 530 485 480L508 405Q521 370 517 282L523 335 546 450Q576 560 576 600L576 790Q576 825 585 825C596 820 593 790 601 760C617 710 640 660 668 602C682 605 690 640 710 690L760 800 805 895C806 850 811 790 819 782C829 770 840 810 848 840L883 1010C883 960 897 900 910 895C922 895 925 940 945 1016C952 960 967 915 980 913C994 915 1002 1000 1012 1065Q1020 1090 1028 1070C1038 1015 1052 1002 1063 1002C1080 1000 1098 1030 1105 1080L1108 1155 1108 1100Q1120 1082 1130 1092C1142 1120 1160 1130 1200 1210C1218 1245 1222 1270 1214 1274C1205 1272 1206 1245 1204 1210L1204 1085Q1206 1040 1220 990C1240 930 1240 900 1240 880L1240 680Q1238 630 1232 570L1230 470 1222 300 1222 100Q1224 70 1240 35L1257 -50 1267 -100 1275 -190 1279 -244" />
          <path d="M1204 1200L1213 1268" strokeWidth="18" />
        </g>
        <g transform="translate(369 340) scale(.33333)" strokeWidth="12">
          <path d="M172 325L171 362Q190 352 220 352L440 350Q500 344 560 344L852 338" />
          <path d="M532 336L360 337C310 342 290 360 200 362L217 371" />
          <path d="M532 338L360 344 300 354" />
        </g>
      </svg>
    </div>
  );
}
